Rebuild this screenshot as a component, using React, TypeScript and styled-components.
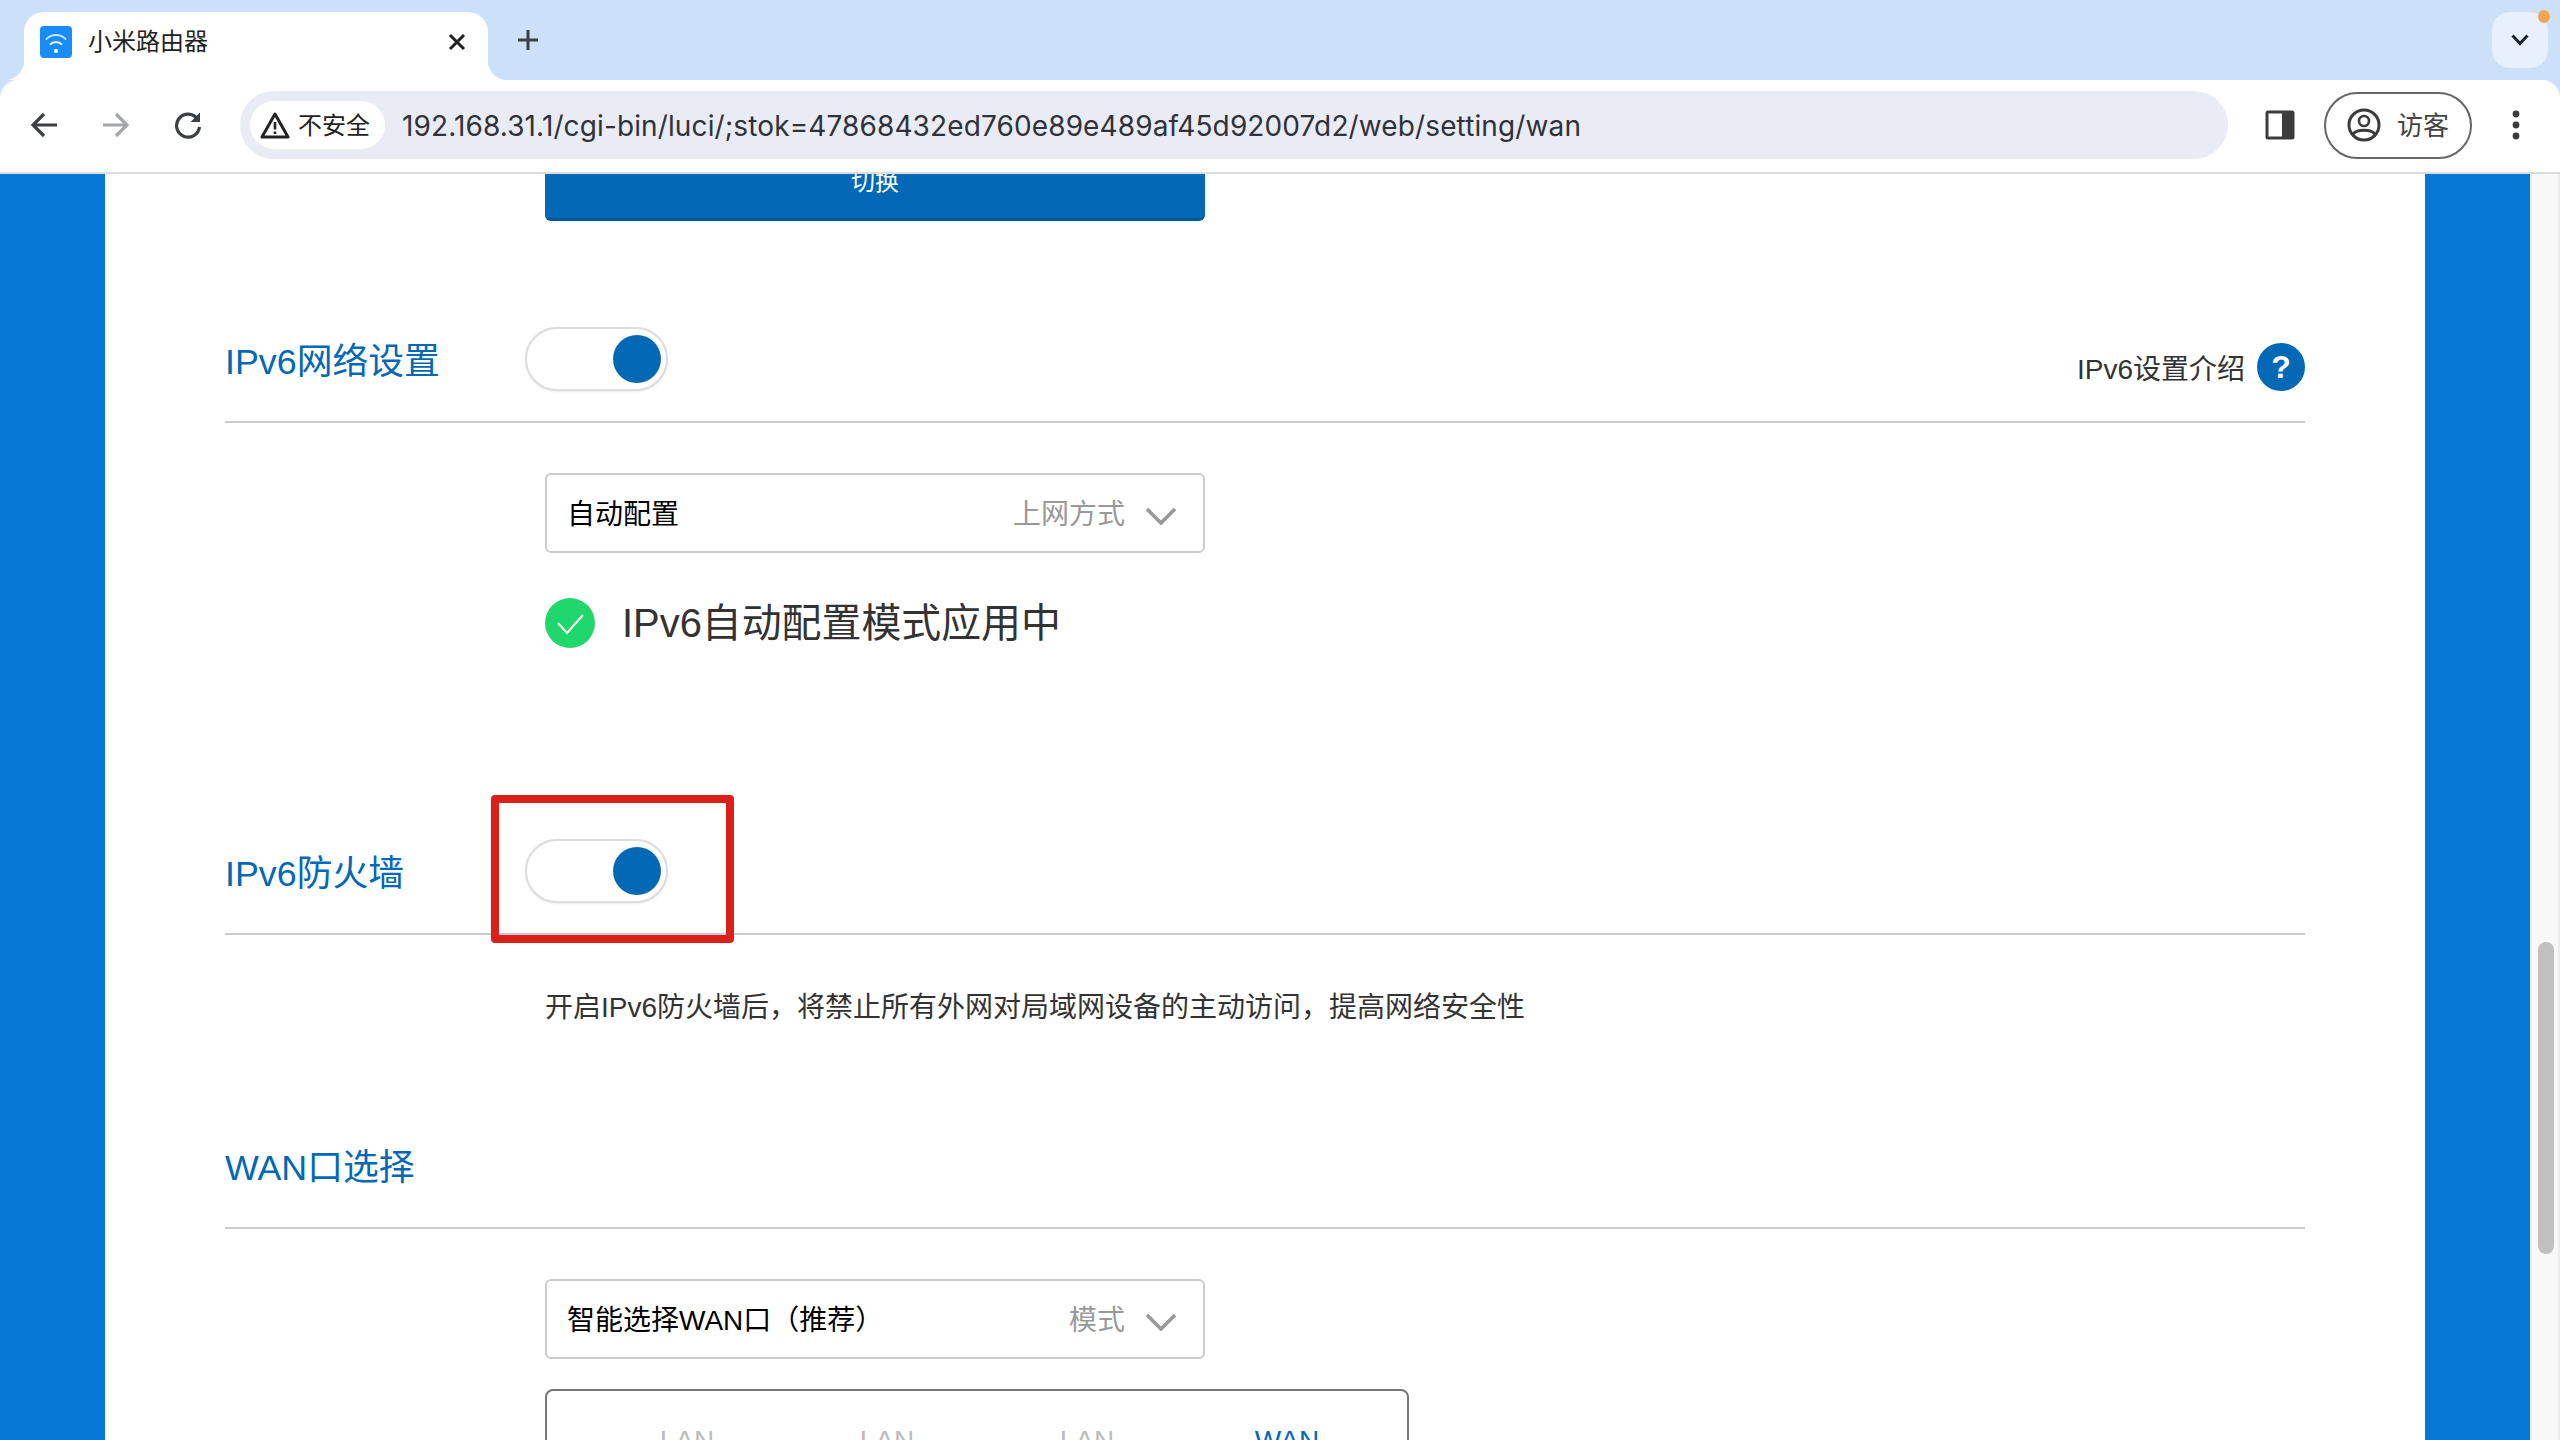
import React from "react";
import styled, { createGlobalStyle } from "styled-components";

const Global = createGlobalStyle`
  html, body { margin: 0; padding: 0; background: #fff; }
  body { font-family: "Liberation Sans", "Noto Sans CJK SC", sans-serif; }
  * { box-sizing: border-box; }
`;

const Shell = styled.div`
  width: 2560px;
  height: 1440px;
  display: flex;
  flex-direction: column;
  overflow: hidden;
  background: #cde0fa;
`;

const TabStrip = styled.div`
  height: 80px;
  flex: none;
  display: flex;
  align-items: flex-end;
  padding-left: 24px;
  padding-right: 12px;
`;

const Tab = styled.div`
  position: relative;
  width: 464px;
  height: 68px;
  background: #fff;
  border-radius: 20px 20px 0 0;
  display: flex;
  align-items: center;
  padding: 0 21px 8px 16px;
  &::before, &::after {
    content: "";
    position: absolute;
    bottom: 0;
    width: 20px;
    height: 20px;
  }
  &::before { left: -20px; background: radial-gradient(circle at 0 0, transparent 20px, #fff 20.5px); }
  &::after { right: -20px; background: radial-gradient(circle at 100% 0, transparent 20px, #fff 20.5px); }
`;

const TabTitle = styled.span`
  flex: 1;
  margin: 0 0 6px 16px;
  font-size: 24px;
  color: #222;
`;

const StripButton = styled.div`
  width: 56px;
  height: 56px;
  margin: 0 0 12px 12px;
  display: flex;
  align-items: center;
  justify-content: center;
`;

const StripSpacer = styled.div`
  flex: 1;
`;

const TabSearch = styled.div`
  position: relative;
  width: 56px;
  height: 56px;
  margin-bottom: 12px;
  border-radius: 18px;
  background: #e7f0fc;
  display: flex;
  align-items: center;
  justify-content: center;
`;

const Badge = styled.span`
  position: absolute;
  top: -2px;
  right: -2px;
  width: 12px;
  height: 13px;
  border-radius: 50%;
  background: #f5a450;
`;

const Toolbar = styled.div`
  height: 94px;
  flex: none;
  display: flex;
  align-items: center;
  padding: 0 8px 2px;
  background: #fff;
  border-bottom: 2px solid #dadce0;
  border-radius: 18px 18px 0 0;
`;

const ToolButton = styled.div<{ $ml?: number }>`
  width: 72px;
  height: 72px;
  flex: none;
  margin-left: ${(p) => p.$ml ?? 0}px;
  display: flex;
  align-items: center;
  justify-content: center;
`;

const Omnibox = styled.div`
  flex: 1;
  height: 68px;
  margin-left: 16px;
  border-radius: 34px;
  background: #e9ecf4;
  display: flex;
  align-items: center;
  padding-left: 10px;
`;

const SecurityChip = styled.div`
  width: 135px;
  height: 48px;
  flex: none;
  border-radius: 24px;
  background: #fff;
  display: flex;
  align-items: center;
  padding: 0 0 0 10px;
  gap: 8px;
  font-size: 24px;
  color: #222;
`;

const ChipText = styled.span`
  margin-bottom: 3px;
`;

const Url = styled.span`
  margin: 2px 0 0 17px;
  font-family: "Inter", "Liberation Sans", sans-serif;
  font-size: 28px;
  letter-spacing: 0.12px;
  color: #30323a;
  white-space: nowrap;
`;

const GuestButton = styled.div`
  width: 148px;
  height: 67px;
  flex: none;
  margin-left: 8px;
  border: 2px solid #666;
  border-radius: 34px;
  display: flex;
  align-items: center;
  padding-left: 21px;
  gap: 16px;
  font-size: 26px;
  color: #444;
`;

const GuestText = styled.span`
  margin-bottom: 3px;
`;

const Viewport = styled.div`
  flex: 1;
  min-height: 0;
  display: flex;
  background: #0478d4;
`;

const Page = styled.div`
  flex: 1;
  min-width: 0;
  padding: 0 105px;
  overflow: hidden;
`;

const Card = styled.div`
  height: 100%;
  background: #fff;
  padding: 0 120px;
  overflow: hidden;
`;

const SwitchButton = styled.div`
  width: 660px;
  height: 80px;
  margin: -33px 0 0 320px;
  background: #0368b5;
  border-bottom: 3px solid #03579a;
  border-radius: 6px;
  display: flex;
  align-items: center;
  justify-content: center;
  color: #fff;
  font-size: 24px;
`;

const Header = styled.div<{ $mt: number }>`
  position: relative;
  display: flex;
  align-items: flex-start;
  height: 96px;
  margin-top: ${(p) => p.$mt}px;
  border-bottom: 2px solid #ccc;
`;

const Title = styled.h2`
  width: 300px;
  flex: none;
  margin: 15px 0 0;
  font-size: 35.8px;
  line-height: 40px;
  font-weight: 400;
  color: #0368b5;
`;

const Toggle = styled.div`
  position: relative;
  width: 143px;
  height: 64px;
  flex: none;
  border: 2px solid #ddd;
  border-radius: 32px;
  background: #fff;
  box-shadow: 0 1px 2px rgba(0, 0, 0, 0.08);
`;

const Knob = styled.span`
  position: absolute;
  top: 6px;
  right: 5px;
  width: 48px;
  height: 48px;
  border-radius: 50%;
  background: #0368b5;
`;

const Highlight = styled.div`
  position: absolute;
  left: -36px;
  top: -46px;
  width: 243px;
  height: 148px;
  border: 8px solid #dd1f1a;
  border-radius: 4px;
`;

const HelpLink = styled.div`
  margin-left: auto;
  margin-top: 16px;
  display: flex;
  align-items: center;
  gap: 12px;
  font-size: 28px;
  color: #333;
`;

const HelpDot = styled.span`
  width: 48px;
  height: 48px;
  border-radius: 50%;
  background: #0368b5;
  color: #fff;
  font-weight: 700;
  font-size: 32px;
  display: flex;
  align-items: center;
  justify-content: center;
`;

const Body = styled.div<{ $mt: number }>`
  margin: ${(p) => p.$mt}px 0 0 320px;
`;

const Select = styled.div`
  width: 660px;
  height: 80px;
  border: 2px solid #ccc;
  border-radius: 6px;
  display: flex;
  align-items: center;
  padding: 0 26px 0 20px;
  font-size: 28px;
  color: #000;
`;

const SelectValue = styled.span`
  flex: 1;
  margin-bottom: 3px;
`;

const SelectLabel = styled.span`
  color: #999;
  margin: 0 20px 3px 0;
`;

const SelectArrow = styled.svg`
  margin-top: 6px;
`;

const Status = styled.div`
  display: flex;
  align-items: center;
  gap: 27px;
  margin-top: 45px;
  font-size: 39.9px;
  line-height: 50px;
  color: #333;
`;

const Description = styled.p`
  margin: 0;
  font-size: 28px;
  line-height: 40px;
  color: #333;
`;

const PortBox = styled.div`
  width: 864px;
  height: 200px;
  margin-top: 30px;
  border: 2px solid #777;
  border-radius: 8px;
  padding: 30px 0 0 40px;
  display: grid;
  grid-template-columns: repeat(4, 200px);
  align-content: start;
`;

const PortLabel = styled.span<{ $active?: boolean }>`
  text-align: center;
  font-size: 28px;
  line-height: 40px;
  color: ${(p) => (p.$active ? "#0368b5" : "#bbb")};
`;

const ScrollTrack = styled.div`
  width: 30px;
  flex: none;
  background: #f8f8f8;
  border-left: 2px solid #ececec;
  border-right: 2px solid #ececec;
  padding: 768px 4px 0 6px;
`;

const ScrollThumb = styled.div`
  width: 16px;
  height: 312px;
  border-radius: 8px;
  background: #c0c0c0;
`;

const Chevron = () => (
  <SelectArrow width="32" height="18" viewBox="0 0 32 18" fill="none">
    <path d="M2 2L16 16L30 2" stroke="#999" strokeWidth="3.6" />
  </SelectArrow>
);

const App: React.FC = () => (
  <>
    <Global />
    <Shell>
      <TabStrip>
        <Tab>
          <svg width="32" height="32" viewBox="0 0 32 32">
            <rect width="32" height="32" rx="4" fill="#1a8cf5" />
            <path d="M6 13.5C11.5 7.5 20.5 7.5 26 13.5" stroke="#fff" strokeOpacity=".75" strokeWidth="2" fill="none" />
            <path d="M10 18.5C13.5 15 18.5 15 22 18.5" stroke="#fff" strokeWidth="2" fill="none" />
            <circle cx="16" cy="25" r="2" fill="#fff" />
          </svg>
          <TabTitle>小米路由器</TabTitle>
          <svg width="20" height="20" viewBox="0 0 20 20">
            <path d="M3 3L17 17M17 3L3 17" stroke="#222" strokeWidth="3" />
          </svg>
        </Tab>
        <StripButton>
          <svg width="24" height="24" viewBox="0 0 24 24">
            <path d="M12 2V22M2 12H22" stroke="#3c4043" strokeWidth="3" />
          </svg>
        </StripButton>
        <StripSpacer />
        <TabSearch>
          <svg width="20" height="14" viewBox="0 0 20 14" fill="none">
            <path d="M2.5 2.5L10 10.5L17.5 2.5" stroke="#1c2433" strokeWidth="3" />
          </svg>
          <Badge />
        </TabSearch>
      </TabStrip>
      <Toolbar>
        <ToolButton>
          <svg width="28" height="28" viewBox="0 0 28 28" fill="none">
            <path d="M27 14H4M14 3L3 14L14 25" stroke="#3c4043" strokeWidth="3.2" />
          </svg>
        </ToolButton>
        <ToolButton>
          <svg width="28" height="28" viewBox="0 0 28 28" fill="none">
            <path d="M1 14H24M14 3L25 14L14 25" stroke="#a4a6a8" strokeWidth="3.2" />
          </svg>
        </ToolButton>
        <ToolButton>
          <svg width="28" height="28" viewBox="0 0 28 28" fill="none">
            <path d="M23.5 8A11.5 11.5 0 1 0 25.5 16" stroke="#3c4043" strokeWidth="3.2" />
            <path d="M26 1.5V11H16.5Z" fill="#3c4043" />
          </svg>
        </ToolButton>
        <Omnibox>
          <SecurityChip>
            <svg width="30" height="28" viewBox="0 0 30 28" fill="none">
              <path d="M15 3L28 26H2Z" stroke="#222" strokeWidth="3" strokeLinejoin="round" />
              <path d="M15 11V18.5M15 20.5V23" stroke="#222" strokeWidth="2.6" />
            </svg>
            <ChipText>不安全</ChipText>
          </SecurityChip>
          <Url>192.168.31.1/cgi-bin/luci/;stok=47868432ed760e89e489af45d92007d2/web/setting/wan</Url>
        </Omnibox>
        <ToolButton $ml={16}>
          <svg width="30" height="30" viewBox="0 0 30 30">
            <rect x="0.5" y="0.5" width="29" height="29" rx="2.5" fill="#3c3c3c" />
            <rect x="3.5" y="3.5" width="13.5" height="23" fill="#fff" />
          </svg>
        </ToolButton>
        <GuestButton>
          <svg width="34" height="34" viewBox="0 0 34 34" fill="none">
            <circle cx="17" cy="17" r="15" stroke="#3c3c3c" strokeWidth="3" />
            <circle cx="17" cy="13" r="5" stroke="#3c3c3c" strokeWidth="2.6" />
            <path d="M6 26C10 21 24 21 28 26" stroke="#3c3c3c" strokeWidth="3" />
          </svg>
          <GuestText>访客</GuestText>
        </GuestButton>
        <ToolButton $ml={8}>
          <svg width="8" height="30" viewBox="0 0 8 30">
            <circle cx="4" cy="4" r="3.4" fill="#3c3c3c" />
            <circle cx="4" cy="15" r="3.4" fill="#3c3c3c" />
            <circle cx="4" cy="26" r="3.4" fill="#3c3c3c" />
          </svg>
        </ToolButton>
      </Toolbar>
      <Viewport>
        <Page>
          <Card>
            <SwitchButton>切换</SwitchButton>
            <Header $mt={106}>
              <Title>IPv6网络设置</Title>
              <Toggle>
                <Knob />
              </Toggle>
              <HelpLink>
                IPv6设置介绍
                <HelpDot>?</HelpDot>
              </HelpLink>
            </Header>
            <Body $mt={50}>
              <Select>
                <SelectValue>自动配置</SelectValue>
                <SelectLabel>上网方式</SelectLabel>
                <Chevron />
              </Select>
              <Status>
                <svg width="50" height="50" viewBox="0 0 50 50" fill="none">
                  <circle cx="25" cy="25" r="25" fill="#1fd76a" />
                  <path d="M13 25L22 35L38 17" stroke="#fff" strokeWidth="2" />
                </svg>
                IPv6自动配置模式应用中
              </Status>
            </Body>
            <Header $mt={191}>
              <Title>IPv6防火墙</Title>
              <Toggle>
                <Knob />
                <Highlight />
              </Toggle>
            </Header>
            <Body $mt={53}>
              <Description>开启IPv6防火墙后，将禁止所有外网对局域网设备的主动访问，提高网络安全性</Description>
            </Body>
            <Header $mt={105}>
              <Title>WAN口选择</Title>
            </Header>
            <Body $mt={50}>
              <Select>
                <SelectValue>智能选择WAN口（推荐）</SelectValue>
                <SelectLabel>模式</SelectLabel>
                <Chevron />
              </Select>
              <PortBox>
                <PortLabel>LAN</PortLabel>
                <PortLabel>LAN</PortLabel>
                <PortLabel>LAN</PortLabel>
                <PortLabel $active>WAN</PortLabel>
              </PortBox>
            </Body>
          </Card>
        </Page>
        <ScrollTrack>
          <ScrollThumb />
        </ScrollTrack>
      </Viewport>
    </Shell>
  </>
);

export default App;
